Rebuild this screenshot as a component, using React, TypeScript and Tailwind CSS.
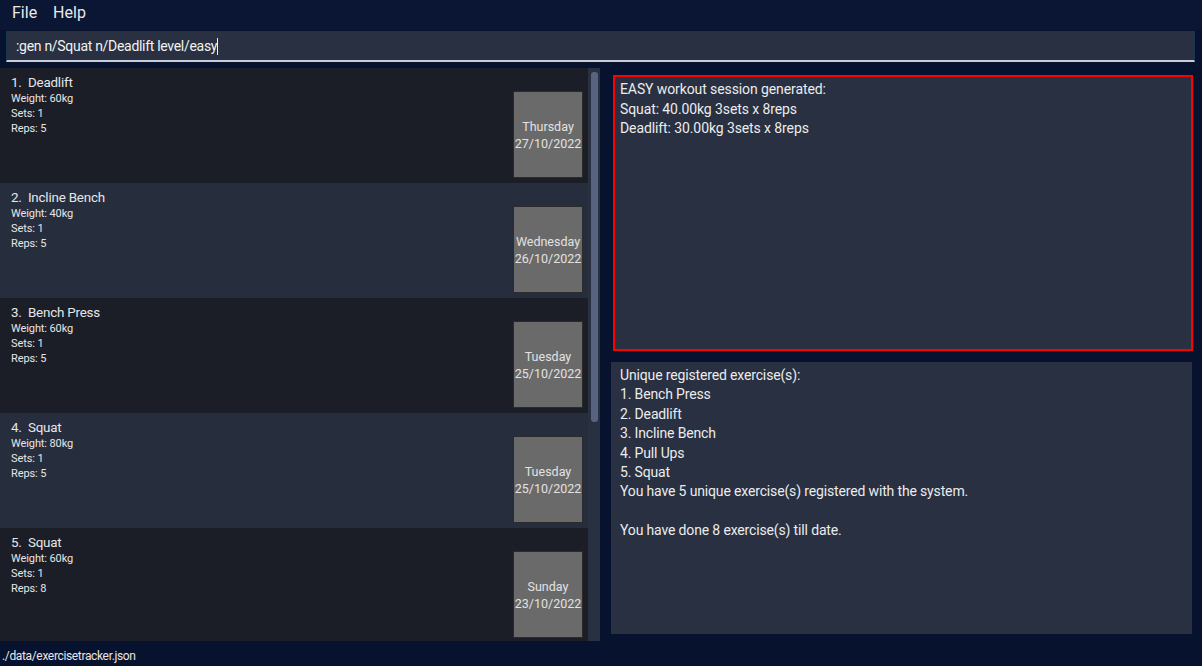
import React from 'react'

interface Exercise {
  name: string
  weight: string
  sets: number
  reps: number
  day: string
  date: string
}

const exercises: Exercise[] = [
  { name: 'Deadlift', weight: '60kg', sets: 1, reps: 5, day: 'Thursday', date: '27/10/2022' },
  { name: 'Incline Bench', weight: '40kg', sets: 1, reps: 5, day: 'Wednesday', date: '26/10/2022' },
  { name: 'Bench Press', weight: '60kg', sets: 1, reps: 5, day: 'Tuesday', date: '25/10/2022' },
  { name: 'Squat', weight: '80kg', sets: 1, reps: 5, day: 'Tuesday', date: '25/10/2022' },
  { name: 'Squat', weight: '60kg', sets: 1, reps: 8, day: 'Sunday', date: '23/10/2022' },
]

const font = { fontFamily: 'Roboto, "Noto Sans", sans-serif' }

function ExerciseCard({ ex, index }: { ex: Exercise; index: number }) {
  const odd = index % 2 === 0
  return (
    <div className={`h-[115px] shrink-0 flex justify-between ${odd ? 'bg-[#1b1e27]' : 'bg-[#262d3d]'}`}>
      <div className="pl-[11px] pt-[6px] text-[#e6e6e6]">
        <p className="text-[13.4px] leading-[17px] tracking-[-0.2px]">
          {index + 1}.&nbsp; {ex.name}
        </p>
        <p className="text-[11px] leading-[15px] tracking-[-0.1px]">Weight: {ex.weight}</p>
        <p className="text-[11px] leading-[15px] tracking-[-0.1px]">Sets: {ex.sets}</p>
        <p className="text-[11px] leading-[15px] tracking-[-0.1px]">Reps: {ex.reps}</p>
      </div>
      <div className="flex items-end pr-[5px] pb-[5px]">
        <div className="w-[70px] h-[87px] bg-[#6a6a6a] border border-[#2b2b2b] flex flex-col items-center justify-center text-[12.5px] leading-[17px] text-[#e2e2e2]">
          <span>{ex.day}</span>
          <span>{ex.date}</span>
        </div>
      </div>
    </div>
  )
}

export default function App() {
  return (
    <div className="w-[1202px] h-[666px] overflow-hidden bg-[#07122f] flex flex-col text-white" style={font}>
      {/* Menu bar */}
      <div className="h-[30px] bg-[#0a1634] flex items-start gap-[16px] pl-[12px] pt-[1px] text-[16px] text-[#e8e8e8]">
        <span>File</span>
        <span>Help</span>
      </div>

      {/* Command box */}
      <div className="px-[6px] pt-px pr-[7px]">
        <div className="h-[31px] bg-[#283041] border border-[#173650] border-b-2 border-b-[#c9cdd6] flex items-center pl-[9px] text-[14px] text-[#f2f2f2] tracking-[-0.3px]">
          <span>:gen n/Squat n/Deadlift level/easy</span>
          <span className="w-px h-[17px] bg-[#f2f2f2]" />
        </div>
      </div>

      {/* Main area */}
      <div className="mt-[6px] h-[573px] flex">
        <div className="w-[588px] h-full overflow-hidden flex flex-col">
          {exercises.map((ex, i) => (
            <ExerciseCard key={i} ex={ex} index={i} />
          ))}
        </div>
        <div className="w-[12px] h-full bg-[#283042] pt-[4px] flex justify-center">
          <div className="w-[7px] h-[350px] rounded-[3px] bg-[#58637f]" />
        </div>

        <div className="flex-1 flex flex-col pt-[7px] pb-[7px]">
          <div className="ml-[13px] mr-[9px] h-[276px] bg-[#283041] border-2 border-[#ff0000] px-[5px] pt-[3px] text-[14px] leading-[19.5px] text-[#ececec] tracking-[-0.1px]">
            <p>EASY workout session generated:</p>
            <p>Squat: 40.00kg 3sets x 8reps</p>
            <p>Deadlift: 30.00kg 3sets x 8reps</p>
          </div>
          <div className="ml-[11px] mr-[10px] mt-[11px] flex-1 bg-[#283041] pl-[9px] pt-[4px] text-[14px] leading-[19.4px] text-[#ececec] tracking-[-0.15px]">
            <p>Unique registered exercise(s):</p>
            <p>1. Bench Press</p>
            <p>2. Deadlift</p>
            <p>3. Incline Bench</p>
            <p>4. Pull Ups</p>
            <p>5. Squat</p>
            <p>You have 5 unique exercise(s) registered with the system.</p>
            <p>&nbsp;</p>
            <p>You have done 8 exercise(s) till date.</p>
          </div>
        </div>
      </div>

      {/* Status bar */}
      <div className="flex-1 flex items-end pb-px pl-[2px] text-[12px] leading-[17px] text-[#e6e6e6] tracking-[-0.35px]">
        ./data/exercisetracker.json
      </div>
    </div>
  )
}
